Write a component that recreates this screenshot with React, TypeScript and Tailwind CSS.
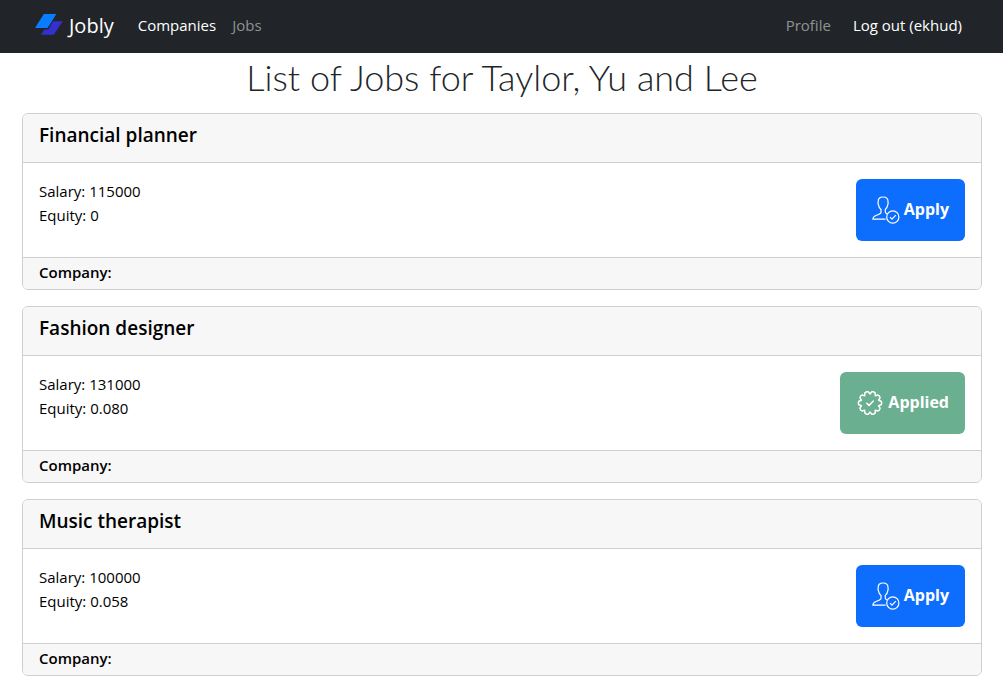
type Job = { id: number; title: string; salary: number; equity: string; applied: boolean };

const jobs: Job[] = [
  { id: 1, title: "Financial planner", salary: 115000, equity: "0", applied: false },
  { id: 2, title: "Fashion designer", salary: 131000, equity: "0.080", applied: true },
  { id: 3, title: "Music therapist", salary: 100000, equity: "0.058", applied: false },
];

function Logo() {
  return (
    <svg width="30" height="26" viewBox="0 0 30 26" aria-hidden="true">
      <path d="M9.8 1 H22.4 L13.6 15 H1 Z" fill="#0a7cff" />
      <path d="M18.8 8.2 H28.8 L19.8 21.8 H7 L10.4 16.6 H14.4 Z" fill="#3430d0" />
    </svg>
  );
}

function UserCheckIcon() {
  return (
    <svg width="28" height="28" viewBox="0 0 28 28" fill="none" stroke="currentColor" strokeWidth="1.2" aria-hidden="true">
      <path d="M13.6 23.2 H0.9 C0.9 21 1.9 20.3 4 19.5 C6.8 18.4 9 17.8 9 16.6 V13.4 C7.4 12.4 6.7 10.6 6.4 8.6 C5.9 7.8 5.9 6.6 6.2 6 C5.9 2.6 7.7 1 11 1 C14.6 1 16.3 2.8 16 6 C16.3 6.8 16.2 7.9 15.8 8.6 C15.5 10.6 14.8 12.2 13.3 13.4 V16 C13.3 16.8 14 17.4 15 17.9" />
      <circle cx="20.8" cy="21" r="6.1" />
      <path d="M18 21.2 L20 23.2 L23.8 19.2" />
    </svg>
  );
}

const seal =
  Array.from({ length: 40 }, (_, i) => {
    const angle = (i * Math.PI) / 20;
    const radius = [11.7, 11.3, 9, 11.3][i % 4];
    return `${i ? "L" : "M"}${(14 + radius * Math.cos(angle)).toFixed(2)} ${(14 + radius * Math.sin(angle)).toFixed(2)}`;
  }).join(" ") + " Z";

function SealCheckIcon() {
  return (
    <svg width="28" height="28" viewBox="0 0 28 28" fill="none" stroke="currentColor" strokeWidth="1.5" strokeLinejoin="round" strokeLinecap="round" aria-hidden="true">
      <path d={seal} />
      <path d="M10.7 14.2 L13 16.4 L17.3 12" />
    </svg>
  );
}

function JobCard({ job }: { job: Job }) {
  return (
    <article className="overflow-hidden rounded-md border border-[#cfcfcf] bg-white">
      <header className="border-b border-[#cfcfcf] bg-[#f7f7f7] px-4 pt-[9px] pb-[15px]">
        <h2 className="text-[19px] leading-6 font-semibold">{job.title}</h2>
      </header>
      <div className="flex items-start justify-between p-4">
        <div className="text-[15px] leading-6">
          <p>Salary: {job.salary}</p>
          <p>Equity: {job.equity}</p>
        </div>
        {job.applied ? (
          <button
            type="button"
            disabled
            className="flex h-[62px] items-center gap-1 rounded-md bg-[#6ab090] px-4 text-base font-bold text-white"
          >
            <SealCheckIcon />
            <span className="pb-0.5">Applied</span>
          </button>
        ) : (
          <button
            type="button"
            className="flex h-[62px] items-center gap-1 rounded-md bg-[#0d6efd] px-4 text-base font-bold text-white"
          >
            <UserCheckIcon />
            <span className="pb-0.5">Apply</span>
          </button>
        )}
      </div>
      <footer className="border-t border-[#cfcfcf] bg-[#f7f7f7] px-4 pt-0.5 pb-[5px] text-[15px] leading-6 font-semibold">
        Company:
      </footer>
    </article>
  );
}

export default function App() {
  return (
    <div className="bg-white font-['Open_Sans','Noto_Sans',sans-serif] text-black">
      <nav className="flex h-[53px] items-center justify-between bg-[#212529] pr-[41px] pb-0.5 pl-[34px] text-[15px] text-white">
        <div className="flex items-center gap-4">
          <a href="#home" className="mr-2 flex items-center gap-[5px] text-xl">
            <Logo />
            Jobly
          </a>
          <a href="#companies">Companies</a>
          <a href="#jobs" className="text-[#909294]">Jobs</a>
        </div>
        <div className="flex items-center gap-[22px]">
          <a href="#profile" className="text-[#909294]">Profile</a>
          <a href="#logout">Log out (ekhud)</a>
        </div>
      </nav>
      <main className="pr-[21px] pb-2 pl-[22px]">
        <h1 className="mb-3 text-center font-['Lato','Open_Sans',sans-serif] text-4xl leading-[48px] font-light text-[#212529]">
          List of Jobs for Taylor, Yu and Lee
        </h1>
        <div className="flex flex-col gap-4">
          {jobs.map((job) => (
            <JobCard key={job.id} job={job} />
          ))}
        </div>
      </main>
    </div>
  );
}
